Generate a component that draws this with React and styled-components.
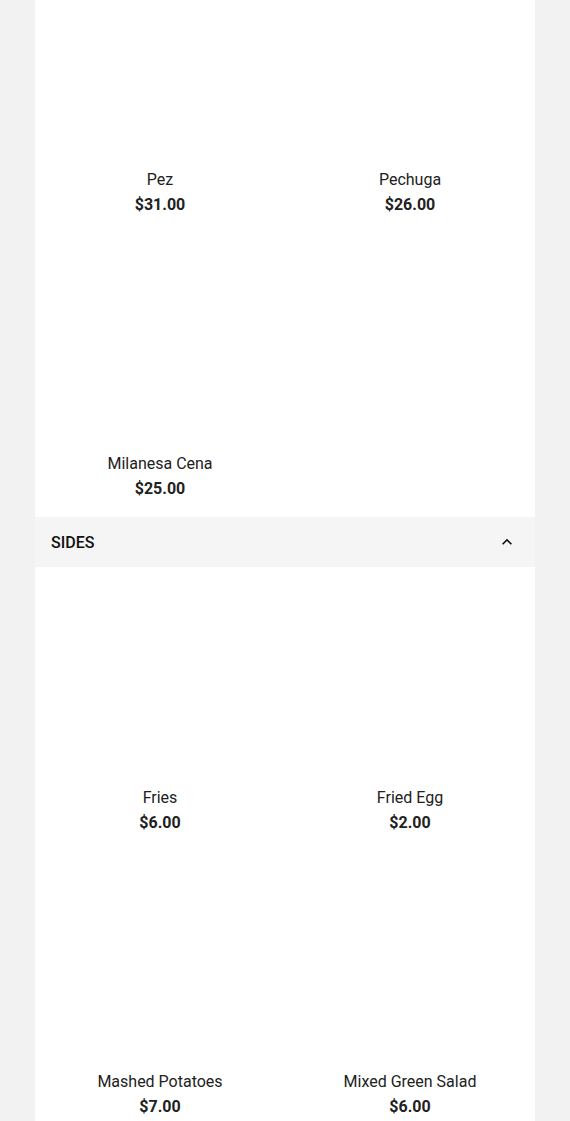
import React from "react";
import styled, { createGlobalStyle } from "styled-components";

const GlobalStyle = createGlobalStyle`
  html, body {
    margin: 0;
    padding: 0;
    background: #f2f2f2;
    font-family: Roboto, "Noto Sans", Arial, sans-serif;
    color: #212121;
  }
`;

const entrees = [
  { name: "Pez", price: 31 },
  { name: "Pechuga", price: 26 },
  { name: "Milanesa Cena", price: 25 },
];

const sides = [
  { name: "Fries", price: 6 },
  { name: "Fried Egg", price: 2 },
  { name: "Mashed Potatoes", price: 7 },
  { name: "Mixed Green Salad", price: 6 },
];

const Page = styled.main`
  width: 500px;
  margin: -51px auto 0;
  background: #fff;
`;

const Grid = styled.div`
  display: grid;
  grid-template-columns: 1fr 1fr;
`;

const Item = styled.div`
  display: flex;
  flex-direction: column;
  align-items: center;
  padding: 19px 0 16px;
  cursor: pointer;
`;

const Photo = styled.div`
  width: 200px;
  height: 200px;
  background: transparent;
`;

const Name = styled.div`
  font-size: 16px;
  line-height: 24px;
  font-weight: 400;
`;

const Price = styled.div`
  margin-top: 1px;
  font-size: 16px;
  line-height: 24px;
  font-weight: 700;
`;

const SectionHeader = styled.button`
  display: flex;
  align-items: center;
  justify-content: space-between;
  width: 100%;
  height: 50px;
  padding: 0 18px 0 16px;
  border: 0;
  background: #f5f5f5;
  font-family: inherit;
  font-size: 16px;
  font-weight: 500;
  text-transform: uppercase;
  color: #111;
  cursor: pointer;
`;

const Chevron = () => (
  <svg width="20" height="20" viewBox="0 0 24 24" fill="#111">
    <path d="M12 8l-6 6 1.41 1.41L12 10.83l4.59 4.58L18 14z" />
  </svg>
);

const MenuGrid = ({ items }) => (
  <Grid>
    {items.map((it) => (
      <Item key={it.name}>
        <Photo />
        <Name>{it.name}</Name>
        <Price>${it.price.toFixed(2)}</Price>
      </Item>
    ))}
  </Grid>
);

export default function App() {
  return (
    <>
      <GlobalStyle />
      <Page>
        <MenuGrid items={entrees} />
        <SectionHeader>
          <span>Sides</span>
          <Chevron />
        </SectionHeader>
        <MenuGrid items={sides} />
      </Page>
    </>
  );
}
